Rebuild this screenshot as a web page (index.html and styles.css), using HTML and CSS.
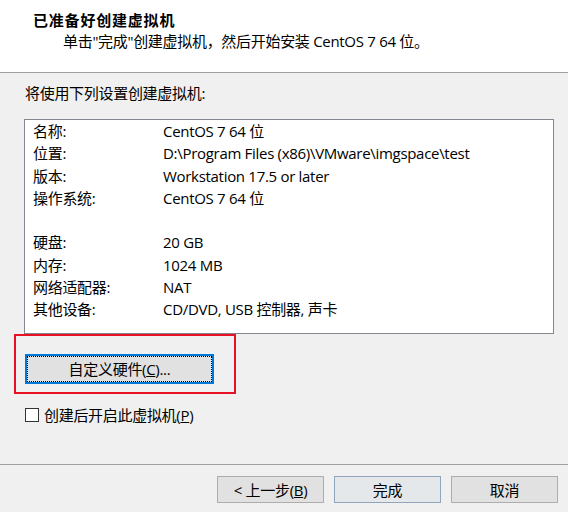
FILE: index.html
```html
<!DOCTYPE html>
<html lang="zh-CN">
<head>
    <meta charset="UTF-8">
    <title>新建虚拟机向导</title>
    <link rel="stylesheet" href="styles.css">
</head>
<body>
    <div class="wizard">
        <div class="wizard-header">
            <h1 class="wizard-title">已准备好创建虚拟机</h1>
            <p class="wizard-subtitle">单击"完成"创建虚拟机，然后开始安装 CentOS 7 64 位。</p>
        </div>

        <div class="wizard-body">
            <p class="section-label">将使用下列设置创建虚拟机:</p>
            <div class="summary-box">
                <div class="summary-row"><span class="key">名称:</span><span class="val">CentOS 7 64 位</span></div>
                <div class="summary-row"><span class="key">位置:</span><span class="val">D:\Program Files (x86)\VMware\imgspace\test</span></div>
                <div class="summary-row"><span class="key">版本:</span><span class="val">Workstation 17.5 or later</span></div>
                <div class="summary-row"><span class="key">操作系统:</span><span class="val">CentOS 7 64 位</span></div>
                <div class="summary-row"></div>
                <div class="summary-row"><span class="key">硬盘:</span><span class="val">20 GB</span></div>
                <div class="summary-row"><span class="key">内存:</span><span class="val">1024 MB</span></div>
                <div class="summary-row"><span class="key">网络适配器:</span><span class="val">NAT</span></div>
                <div class="summary-row"><span class="key">其他设备:</span><span class="val">CD/DVD, USB 控制器, 声卡</span></div>
            </div>

            <div class="highlight-box">
                <button class="win-btn custom-btn" type="button">自定义硬件(<u>C</u>)...</button>
            </div>

            <label class="check-row">
                <span class="check-box"></span>
                <span>创建后开启此虚拟机(<u>P</u>)</span>
            </label>
        </div>

        <div class="wizard-footer">
            <button class="win-btn" type="button">&lt; 上一步(<u>B</u>)</button>
            <button class="win-btn default-btn" type="button">完成</button>
            <button class="win-btn" type="button">取消</button>
        </div>
    </div>
</body>
</html>
```

FILE: styles.css
```css
body {
    margin: 0;
    background-color: #f0f0f0;
    font-family: "Open Sans", "Noto Sans CJK SC", sans-serif;
    font-size: 15px;
    letter-spacing: -0.3px;
    color: #000;
}
.wizard {
    width: 568px;
    height: 512px;
    display: flex;
    flex-direction: column;
}
.wizard-header {
    height: 72px;
    background-color: #fff;
    border-bottom: 1px solid #a0a0a0;
}
.wizard-title {
    margin: 10px 0 0 33px;
    font-family: "Noto Sans CJK SC", sans-serif;
    font-size: 15px;
    font-weight: 700;
    letter-spacing: 0.8px;
    line-height: 20px;
}
.wizard-subtitle {
    margin: 1px 0 0 63px;
    line-height: 20px;
}
.wizard-body {
    flex: 1;
}
.section-label {
    margin: 10px 0 0 25px;
    line-height: 20px;
}
.summary-box {
    margin: 16px 0 0 24px;
    width: 528px;
    height: 213px;
    border: 1px solid #828790;
    background-color: #fff;
}
.summary-row {
    display: flex;
    height: 22.25px;
    line-height: 22.25px;
    padding-left: 8px;
}
.summary-row .key {
    width: 130px;
}
.highlight-box {
    margin-left: 14px;
    width: 218px;
    height: 56px;
    border: 2px solid #e81123;
}
.win-btn {
    width: 107px;
    height: 27px;
    padding: 0;
    border: 1px solid #adadad;
    background-color: #e1e1e1;
    font: inherit;
    letter-spacing: inherit;
    line-height: 20px;
    color: #000;
}
.custom-btn {
    margin: 18px 0 0 9px;
    width: 189px;
    height: 30px;
    border: 2px solid #0078d7;
    outline: 1px dotted #000;
    outline-offset: -3px;
}
.default-btn {
    border-color: #8fa6bd;
    background-color: #e5e8eb;
}
.check-row {
    display: flex;
    align-items: center;
    gap: 5px;
    margin: 13px 0 0 25px;
    line-height: 16px;
}
.check-box {
    width: 12px;
    height: 12px;
    border: 1px solid #333;
    background-color: #fff;
}
.wizard-footer {
    display: flex;
    justify-content: flex-end;
    gap: 10px;
    height: 36px;
    padding: 11px 10px 0 0;
    border-top: 1px solid #a0a0a0;
}
```
